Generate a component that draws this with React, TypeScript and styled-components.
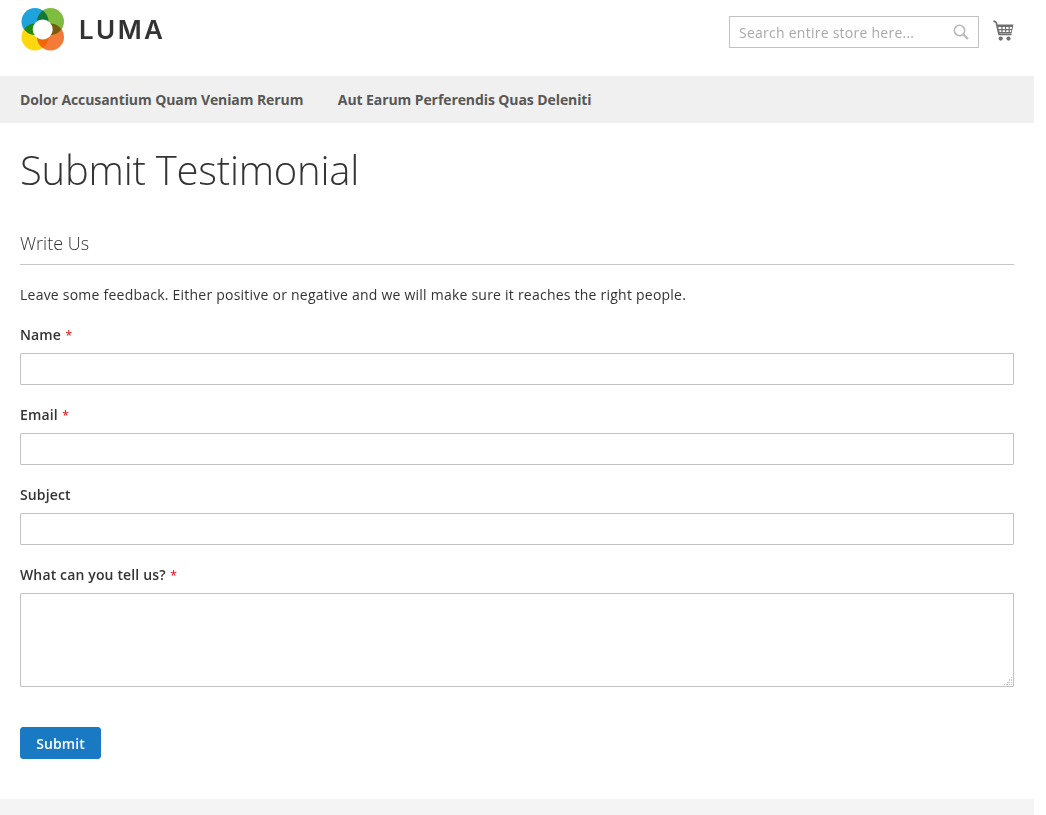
import styled, { createGlobalStyle } from "styled-components";

const Global = createGlobalStyle`
html, body {
  margin: 0;
  padding: 0;
  background: #fff;
  overflow: hidden;
}
body {
  font-family: "Open Sans", "Liberation Sans", sans-serif;
  font-size: 14px;
  color: #333;
}
`
const Page = styled.div`
width: 1034px;
height: 815px;
overflow: hidden;
display: flex;
flex-direction: column;
`
const Header = styled.header`
height: 76px;
box-sizing: border-box;
padding: 8px 20px 0;
display: flex;
justify-content: space-between;
align-items: flex-start;
`
const Logo = styled.div`
display: flex;
align-items: center;
gap: 15px;
height: 44px;
`
const LogoText = styled.span`
font-family: Inter, sans-serif;
font-size: 26px;
font-weight: 600;
letter-spacing: 2.4px;
color: #333;
line-height: 44px;
`
const Tools = styled.div`
display: flex;
align-items: flex-start;
gap: 14px;
padding-top: 8px;
`
const CartSlot = styled.div`
padding-top: 4px;
height: 21px;
`
const SearchBox = styled.div`
width: 250px;
height: 32px;
box-sizing: border-box;
border: 1px solid #c2c2c2;
display: flex;
align-items: center;
padding: 0 9px;
justify-content: space-between;
`
const SearchInput = styled.input`
border: 0;
outline: 0;
padding: 0;
flex: 1;
min-width: 0;
font: 14px "Open Sans", sans-serif;
letter-spacing: 0.25px;
color: #333;
&::placeholder {
  color: #a9a9a9;
  opacity: 1;
}
`
const Nav = styled.nav`
height: 47px;
background: #f0f0f0;
display: flex;
align-items: center;
gap: 34.5px;
padding: 0 20px;
`
const NavLink = styled.a`
font-size: 14px;
font-weight: 700;
letter-spacing: -0.09px;
color: #575757;
`
const Main = styled.main`
flex: 1;
padding: 0 20px;
`
const Title = styled.h1`
margin: 20px 0 0;
font-size: 40px;
font-weight: 300;
letter-spacing: -0.22px;
line-height: 54px;
color: #333;
`
const Legend = styled.div`
margin-top: 34px;
padding-bottom: 8px;
border-bottom: 1px solid #c6c6c6;
font-size: 18px;
font-weight: 300;
line-height: 25px;
color: #333;
`
const Intro = styled.p`
margin: 20px 0 0;
line-height: 20px;
letter-spacing: 0.23px;
color: #333;
`
const Field = styled.div`
margin-top: 20px;
`
const Label = styled.label`
display: block;
font-weight: 600;
letter-spacing: 0.14px;
line-height: 20px;
margin-bottom: 8px;
`
const Star = styled.span`
color: #e02b27;
margin-left: 4.5px;
font-size: 12px;
line-height: 0;
`
const Input = styled.input`
display: block;
width: 100%;
height: 32px;
box-sizing: border-box;
border: 1px solid #c2c2c2;
border-radius: 1px;
padding: 0 9px;
font: 14px "Open Sans", sans-serif;
outline: 0;
`
const gripDots = [
  [13, 6], [11, 8], [13, 8], [11, 9], [13, 9], [9, 11], [10, 11], [13, 11], [11, 11],
  [6, 13], [8, 13], [9, 13], [11, 13], [13, 13],
]
const TextArea = styled.textarea`
display: block;
width: 100%;
height: 94px;
box-sizing: border-box;
border: 1px solid #c2c2c2;
border-radius: 1px;
padding: 9px;
font: 14px "Open Sans", sans-serif;
outline: 0;
&::-webkit-resizer {
  background-color: #fff;
  background-repeat: no-repeat;
  background-size: 1px 1px;
  background-image: ${gripDots.map(() => "linear-gradient(#c4c4c4, #c4c4c4)").join(", ")};
  background-position: ${gripDots.map(([x, y]) => `${x}px ${y}px`).join(", ")};
}
`
const SubmitButton = styled.button`
display: block;
margin-top: 40px;
width: 81px;
height: 32px;
border: 1px solid #1979c3;
border-radius: 3px;
background: #1979c3;
color: #fff;
font: 600 14px "Open Sans", sans-serif;
letter-spacing: 0.1px;
padding: 0;
`
const Footer = styled.footer`
height: 16px;
background: #f4f4f4;
`
const Petal = styled.circle`
mix-blend-mode: multiply;
`

function LumaMark() {
  return (
    <svg width="44" height="44" viewBox="0 0 44 44">
      <Petal cx="15" cy="13.5" r="13.5" fill="#1fa3dc" />
      <Petal cx="30.5" cy="13.5" r="13.5" fill="#7ebd3f" />
      <Petal cx="15" cy="29" r="13.5" fill="#fdd80f" />
      <Petal cx="30.5" cy="29" r="13.5" fill="#f47a38" />
      <circle cx="22.7" cy="21.5" r="10" fill="#fff" />
    </svg>
  )
}

function SearchIcon() {
  return (
    <svg width="16" height="16" viewBox="0 0 16 16" fill="none" stroke="#b9b9b9">
      <circle cx="6.5" cy="6.5" r="5.2" strokeWidth="1.6" />
      <path d="M10.5 10.5 L15 15" strokeWidth="2.2" />
    </svg>
  )
}

function CartIcon() {
  return (
    <svg width="21" height="21" viewBox="0 0 21 21">
      <path d="M0.5 0.8 L3.2 2.5 L6 14.5 H18.5" fill="none" stroke="#6f6f6f" strokeWidth="1.6" />
      <path d="M4 4.5 H20.5 L18.5 13.5 H6 Z" fill="#6f6f6f" />
      <path d="M5.5 7 H8.3 V9 H5.5 Z M9.6 7 H12 V9 H9.6 Z M13.2 7 H15.6 V9 H13.2 Z M16.8 7 H19 L18.6 9 H16.8 Z" fill="#fff" />
      <path d="M6.2 10.3 H8.3 V12 H6.6 Z M9.6 10.3 H12 V12 H9.6 Z M13.2 10.3 H15.6 V12 H13.2 Z M16.8 10.3 H18.4 L18 12 H16.8 Z" fill="#fff" />
      <circle cx="7.7" cy="18.6" r="2.1" fill="#6f6f6f" />
      <circle cx="15.5" cy="18.6" r="2.1" fill="#6f6f6f" />
    </svg>
  )
}

export default function App() {
  return (
    <Page>
      <Global />
      <Header>
        <Logo>
          <LumaMark />
          <LogoText>LUMA</LogoText>
        </Logo>
        <Tools>
          <SearchBox>
            <SearchInput placeholder="Search entire store here..." />
            <SearchIcon />
          </SearchBox>
          <CartSlot>
            <CartIcon />
          </CartSlot>
        </Tools>
      </Header>
      <Nav>
        <NavLink>Dolor Accusantium Quam Veniam Rerum</NavLink>
        <NavLink>Aut Earum Perferendis Quas Deleniti</NavLink>
      </Nav>
      <Main>
        <Title>Submit Testimonial</Title>
        <Legend>Write Us</Legend>
        <Intro>Leave some feedback. Either positive or negative and we will make sure it reaches the right people.</Intro>
        <Field>
          <Label>Name<Star>*</Star></Label>
          <Input />
        </Field>
        <Field>
          <Label>Email<Star>*</Star></Label>
          <Input />
        </Field>
        <Field>
          <Label>Subject</Label>
          <Input />
        </Field>
        <Field>
          <Label>What can you tell us?<Star>*</Star></Label>
          <TextArea />
        </Field>
        <SubmitButton>Submit</SubmitButton>
      </Main>
      <Footer />
    </Page>
  )
}
